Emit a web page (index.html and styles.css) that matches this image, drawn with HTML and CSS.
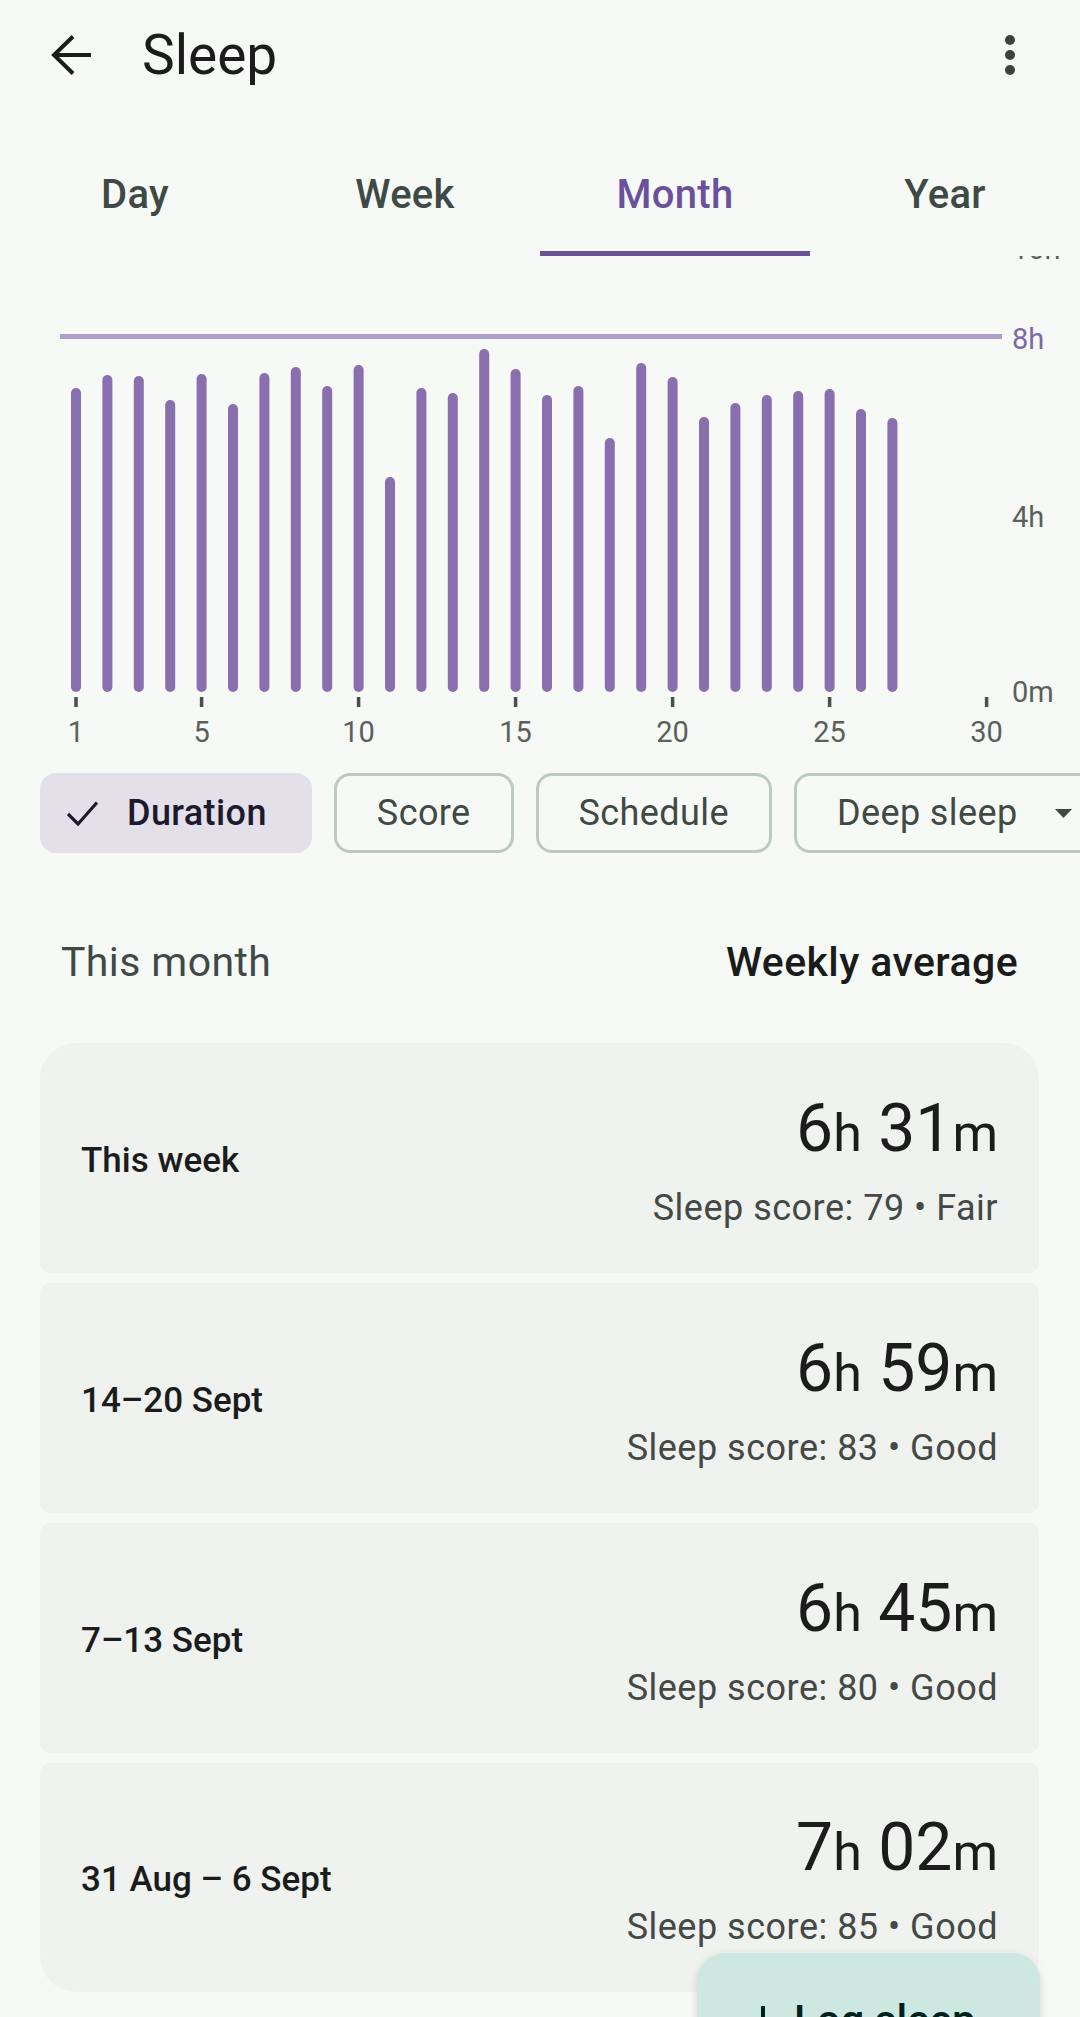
FILE: index.html
```html
<!doctype html>
<html>
<head>
<meta charset="utf-8">
<meta name="viewport" content="width=device-width, initial-scale=1">
<title>Sleep</title>
<link rel="stylesheet" href="styles.css">
</head>

<body>
<div class="page">
	<div class="topbar">
		<svg class="back" viewBox="0 0 40 40" width="40" height="40">
			<path d="M40 20H3 M22 1.5L3 20l19 18.5" fill="none" stroke="#1b1c1b" stroke-width="4"/>
		</svg>
		<h1 class="title">Sleep</h1>
		<div class="menu"><span></span><span></span><span></span></div>
	</div>

	<div class="tabs">
		<div class="tab">Day</div>
		<div class="tab">Week</div>
		<div class="tab active">Month</div>
		<div class="tab">Year</div>
	</div>

	<svg class="chart" viewBox="0 256 1080 504" width="1080" height="504">
		<text class="axis" x="1012" y="259">10h</text>
		<line class="goal" x1="60" y1="336.5" x2="1002" y2="336.5"/>
		<text class="axis goal-label" x="1012" y="349">8h</text>
		<text class="axis" x="1012" y="527">4h</text>
		<text class="axis" x="1012" y="702">0m</text>

		<g class="bars">
			<line x1="76" y1="393" x2="76" y2="687"/>
			<line x1="107.4" y1="380" x2="107.4" y2="687"/>
			<line x1="138.8" y1="381" x2="138.8" y2="687"/>
			<line x1="170.2" y1="405" x2="170.2" y2="687"/>
			<line x1="201.6" y1="379" x2="201.6" y2="687"/>
			<line x1="233" y1="409" x2="233" y2="687"/>
			<line x1="264.4" y1="378" x2="264.4" y2="687"/>
			<line x1="295.8" y1="372" x2="295.8" y2="687"/>
			<line x1="327.2" y1="391" x2="327.2" y2="687"/>
			<line x1="358.6" y1="370" x2="358.6" y2="687"/>
			<line x1="390" y1="482" x2="390" y2="687"/>
			<line x1="421.4" y1="393" x2="421.4" y2="687"/>
			<line x1="452.8" y1="398" x2="452.8" y2="687"/>
			<line x1="484.2" y1="354" x2="484.2" y2="687"/>
			<line x1="515.6" y1="374" x2="515.6" y2="687"/>
			<line x1="547" y1="400" x2="547" y2="687"/>
			<line x1="578.4" y1="391" x2="578.4" y2="687"/>
			<line x1="609.8" y1="443" x2="609.8" y2="687"/>
			<line x1="641.2" y1="368" x2="641.2" y2="687"/>
			<line x1="672.6" y1="382" x2="672.6" y2="687"/>
			<line x1="704" y1="422" x2="704" y2="687"/>
			<line x1="735.4" y1="408" x2="735.4" y2="687"/>
			<line x1="766.8" y1="400" x2="766.8" y2="687"/>
			<line x1="798.2" y1="396" x2="798.2" y2="687"/>
			<line x1="829.6" y1="394" x2="829.6" y2="687"/>
			<line x1="861" y1="414" x2="861" y2="687"/>
			<line x1="892.4" y1="423" x2="892.4" y2="687"/>
		</g>

		<g class="ticks">
			<line x1="76" y1="697" x2="76" y2="707"/>
			<line x1="201.6" y1="697" x2="201.6" y2="707"/>
			<line x1="358.6" y1="697" x2="358.6" y2="707"/>
			<line x1="515.6" y1="697" x2="515.6" y2="707"/>
			<line x1="672.6" y1="697" x2="672.6" y2="707"/>
			<line x1="829.6" y1="697" x2="829.6" y2="707"/>
			<line x1="986.6" y1="697" x2="986.6" y2="707"/>
		</g>
		<g class="days">
			<text x="76" y="742">1</text>
			<text x="201.6" y="742">5</text>
			<text x="358.6" y="742">10</text>
			<text x="515.6" y="742">15</text>
			<text x="672.6" y="742">20</text>
			<text x="829.6" y="742">25</text>
			<text x="986.6" y="742">30</text>
		</g>
	</svg>

	<div class="chips">
		<div class="chip selected">
			<svg viewBox="0 0 31 25" width="31" height="25"><path d="M1 13l10 10L30 1.5" fill="none" stroke="#1e1a2d" stroke-width="3.2"/></svg>
			Duration
		</div>
		<div class="chip">Score</div>
		<div class="chip">Schedule</div>
		<div class="chip drop">
			Deep sleep
			<svg viewBox="0 0 17 9" width="17" height="9"><path d="M0 0h17L8.5 9z" fill="#404943"/></svg>
		</div>
	</div>

	<div class="summary-head">
		<span class="period">This month</span>
		<span class="mode">Weekly average</span>
	</div>

	<div class="weeks">
		<div class="week">
			<div class="week-name">This week</div>
			<div class="week-data">
				<div class="value">6<small>h</small> 31<small>m</small></div>
				<div class="score">Sleep score: 79 • Fair</div>
			</div>
		</div>
		<div class="week">
			<div class="week-name">14–20 Sept</div>
			<div class="week-data">
				<div class="value">6<small>h</small> 59<small>m</small></div>
				<div class="score">Sleep score: 83 • Good</div>
			</div>
		</div>
		<div class="week">
			<div class="week-name">7–13 Sept</div>
			<div class="week-data">
				<div class="value">6<small>h</small> 45<small>m</small></div>
				<div class="score">Sleep score: 80 • Good</div>
			</div>
		</div>
		<div class="week">
			<div class="week-name">31 Aug – 6 Sept</div>
			<div class="week-data">
				<div class="value">7<small>h</small> 02<small>m</small></div>
				<div class="score">Sleep score: 85 • Good</div>
			</div>
		</div>
	</div>

	<div class="fab">
		<svg viewBox="0 0 30 30" width="30" height="30"><path d="M15 0v30M0 15h30" stroke="#00201b" stroke-width="4"/></svg>
		<span>Log sleep</span>
	</div>
</div>
</body>
</html>
```

FILE: styles.css
```css
body{
	margin:0;
	background-color:#f6f9f6;
	color:#1b1c1b;
	font-family:Roboto, "Noto Sans", sans-serif;
	}
.page{
	position:relative;
	width:1080px;
	height:2017px;
	overflow:hidden;
	}

/* top bar */
.topbar{
	height:110px;
	display:flex;
	align-items:center;
	padding:0 65px 0 51px;
	}
.back{
	flex:none;
	}
.title{
	flex:1;
	margin:0 0 0 51px;
	font-size:55px;
	font-weight:400;
	line-height:70px;
	}
.menu{
	display:flex;
	flex-direction:column;
	gap:5px;
	}
.menu span{
	width:10px;
	height:10px;
	border-radius:50%;
	background-color:#3d4240;
	}

/* tabs */
.tabs{
	display:grid;
	grid-template-columns:repeat(4, 1fr);
	height:146px;
	}
.tab{
	box-sizing:border-box;
	padding-top:60px;
	line-height:50px;
	text-align:center;
	font-size:40px;
	font-weight:500;
	letter-spacing:.3px;
	color:#3f4945;
	border-bottom:5px solid transparent;
	}
.tab.active{
	color:#6b509c;
	border-bottom-color:#6a5396;
	}

/* chart */
.chart{
	display:block;
	}
.chart .axis{
	font-family:Roboto, sans-serif;
	font-size:29px;
	fill:#5b605d;
	}
.chart .goal-label{
	fill:#7e67a8;
	}
.chart .goal{
	stroke:#ad9fc9;
	stroke-width:5;
	}
.bars line{
	stroke:#8a6fae;
	stroke-width:10;
	stroke-linecap:round;
	}
.ticks line{
	stroke:#4a4f4c;
	stroke-width:3.5;
	}
.days text{
	font-family:Roboto, sans-serif;
	font-size:29px;
	fill:#5b605d;
	text-anchor:middle;
	}

/* filter chips */
.chips{
	display:flex;
	gap:22px;
	margin-top:13px;
	padding-left:40px;
	overflow:hidden;
	}
.chip{
	flex:none;
	box-sizing:border-box;
	height:80px;
	display:flex;
	align-items:center;
	padding:0 40px;
	border:3px solid #bfc9c3;
	border-radius:16px;
	font-size:36px;
	letter-spacing:.4px;
	color:#404943;
	white-space:nowrap;
	}
.chip.selected{
	gap:29px;
	padding:0 42px 0 24px;
	border-color:transparent;
	background-color:#e3e0ea;
	color:#1e1a2d;
	font-weight:500;
	}
.chip.drop{
	gap:37px;
	padding-right:60px;
	}

/* weekly list */
.summary-head{
	display:flex;
	justify-content:space-between;
	margin-top:79px;
	padding:0 62px 0 61px;
	line-height:60px;
	font-size:41px;
	}
.period{
	color:#3f4945;
	letter-spacing:.4px;
	}
.mode{
	font-weight:500;
	letter-spacing:.4px;
	color:#191c1b;
	}
.weeks{
	display:flex;
	flex-direction:column;
	gap:10px;
	margin-top:51px;
	padding:0 41px 0 40px;
	}
.week{
	box-sizing:border-box;
	height:230px;
	display:flex;
	align-items:center;
	justify-content:space-between;
	padding:4px 41px 0 41px;
	background-color:#eff2ef;
	border-radius:10px;
	}
.week:first-child{
	border-radius:36px 36px 10px 10px;
	}
.week:last-child{
	height:229px;
	border-radius:10px 10px 36px 36px;
	}
.week-name{
	font-size:35px;
	font-weight:500;
	color:#1b1d1c;
	}
.week-data{
	text-align:right;
	}
.value{
	font-size:66px;
	line-height:76px;
	color:#1b1c1b;
	}
.value small{
	font-size:52px;
	line-height:1;
	}
.score{
	margin-top:19px;
	font-size:36px;
	letter-spacing:.5px;
	line-height:44px;
	color:#444846;
	}

/* floating button */
.fab{
	position:absolute;
	left:697px;
	top:1953px;
	width:343px;
	height:140px;
	box-sizing:border-box;
	display:flex;
	align-items:flex-start;
	gap:16px;
	padding:43px 0 0 51px;
	border-radius:28px;
	background-color:#cde8e1;
	box-shadow:0 3px 8px rgba(0,0,0,.14);
	font-size:42px;
	font-weight:500;
	line-height:50px;
	color:#00201b;
	}
.fab svg{
	margin-top:10px;
	}
```
